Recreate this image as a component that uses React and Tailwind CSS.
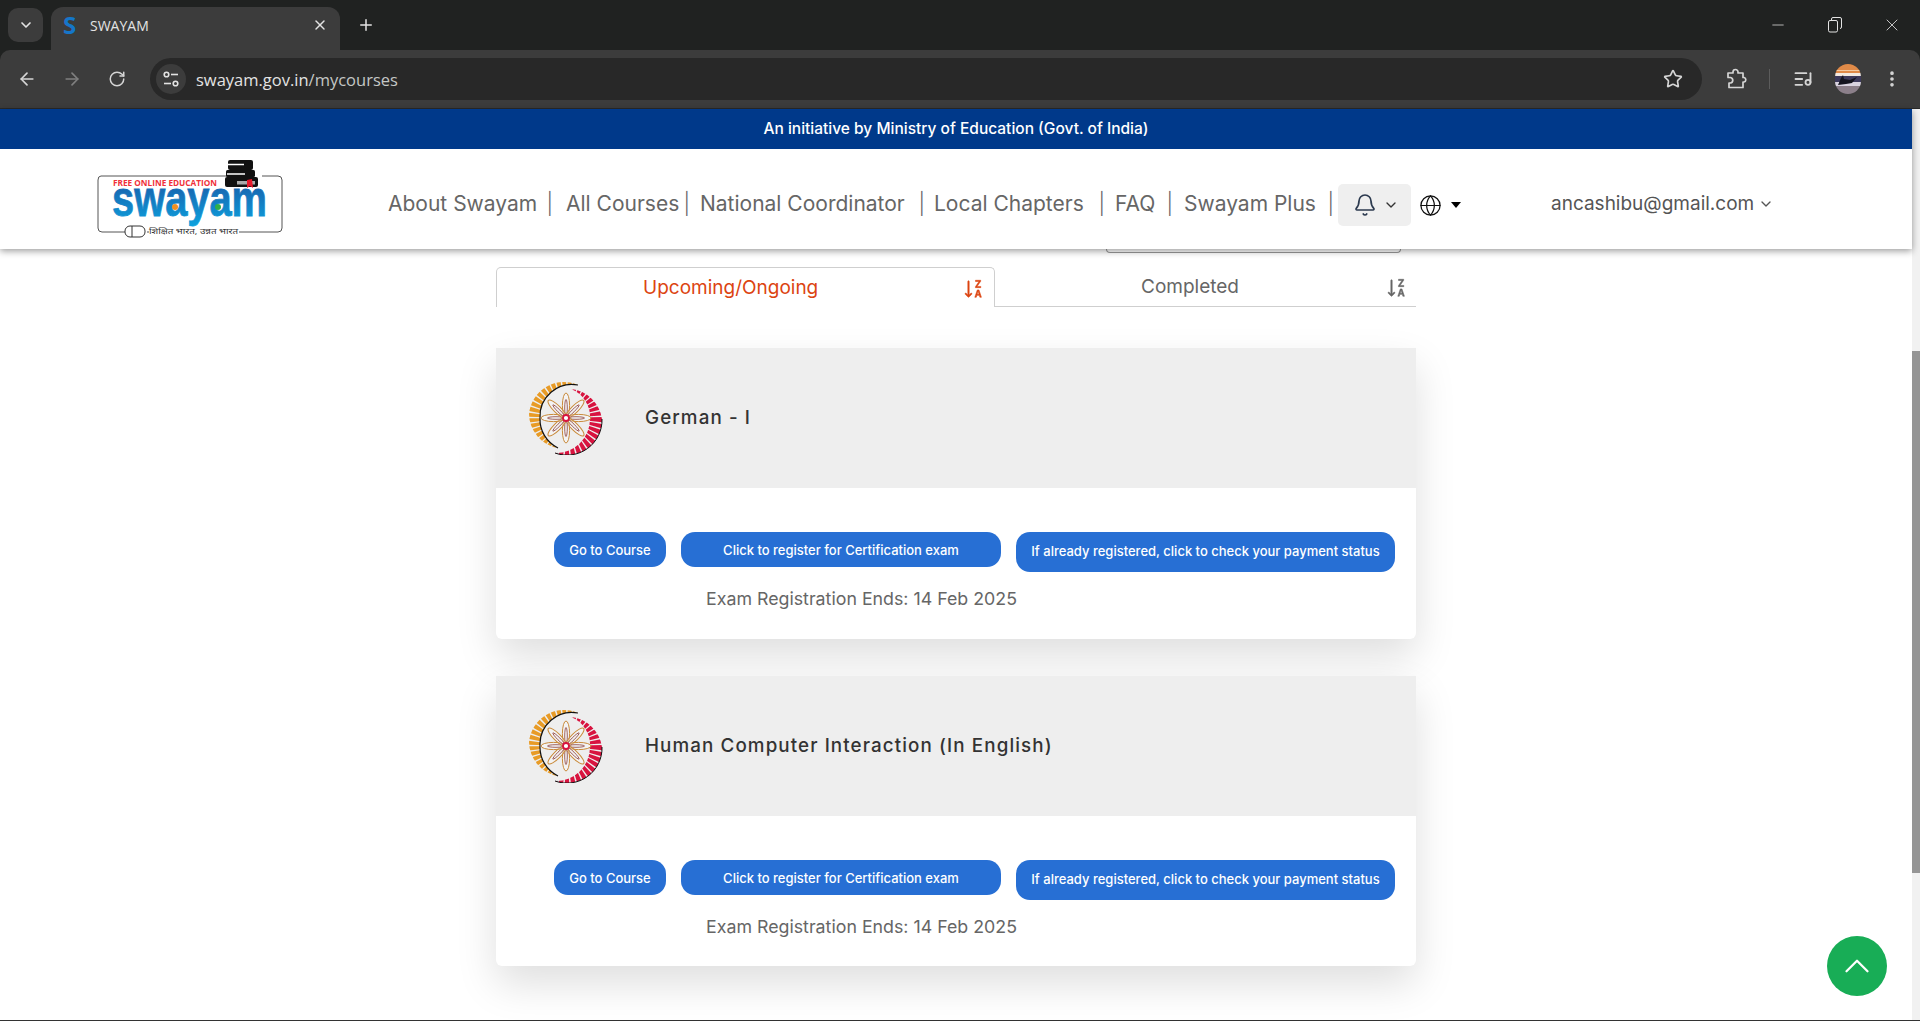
import React from 'react';
import { ArrowLeft, ArrowRight, RotateCw, Star, ListMusic, ChevronDown, ChevronUp, X, Plus, Minus, Bell, Globe, EllipsisVertical } from 'lucide-react';
import { BsSortAlphaDownAlt } from 'react-icons/bs';

const NAV = [
  { label: 'About Swayam', cls: 'w-[165px]' },
  { label: 'All Courses', cls: 'w-[124px] ml-[13px]' },
  { label: 'National Coordinator', cls: 'w-[225px] ml-[10px]' },
  { label: 'Local Chapters', cls: 'w-[171px] ml-[9px]' },
  { label: 'FAQ', cls: 'w-[58px] ml-[10px]' },
  { label: 'Swayam Plus', cls: 'w-[150px] ml-[11px]' },
];

const COURSES = ['German - I', 'Human Computer Interaction (In English)'];

const ORANGE_ARC = 'M49 4 A35 35 0 0 0 0 33 A35 35 0 0 0 29 67 A32 32 0 0 1 11 37 A32 32 0 0 1 49 4 Z';
const RED_ARC = 'M42 8 A35 35 0 0 1 73 38 A35 35 0 0 1 26 72 A34 34 0 0 0 61 38 A30 30 0 0 0 42 8 Z';

const InstituteLogo = () => (
  <svg width="74" height="74" viewBox="0 0 74 74" className="shrink-0">
    <defs>
      <clipPath id="orangeArc"><path d={ORANGE_ARC} /></clipPath>
      <clipPath id="redArc"><path d={RED_ARC} /></clipPath>
    </defs>
    <g clipPath="url(#orangeArc)">
      <circle cx="37" cy="37" r="26" fill="none" stroke="#e89b26" strokeWidth="24" strokeDasharray="3 1.1" />
    </g>
    <path d="M29 67 A32 32 0 0 1 11 37 A32 32 0 0 1 49 4" fill="none" stroke="#111" strokeWidth="1.2" />
    <g clipPath="url(#redArc)">
      <circle cx="37" cy="37" r="28" fill="none" stroke="#d8133f" strokeWidth="24" strokeDasharray="3.4 1.2" />
    </g>
    <path d="M73 38 A35 35 0 0 1 26 72" fill="none" stroke="#111" strokeWidth="1" />
    {[0, 45, 90, 135, 180, 225, 270, 315].map((deg) => (
      <g key={deg} transform={`rotate(${deg} 37 37)`}>
        <ellipse cx="37" cy="24.5" rx="3.6" ry="12.5" fill="#fff" fillOpacity="0.3" stroke="#c98a3a" strokeWidth="1" />
        <ellipse cx="37" cy="27" rx="1.3" ry="8.5" fill="none" stroke="#8c3f3a" strokeWidth="0.8" />
      </g>
    ))}
    <circle cx="37" cy="37" r="3" fill="#fff" stroke="#d8133f" strokeWidth="1.8" />
  </svg>
);

const SwayamLogo = () => (
  <svg width="186" height="80" viewBox="0 0 186 80" className="shrink-0 overflow-visible">
    <defs>
      <linearGradient id="swayamGrad" x1="0" y1="0" x2="0" y2="1">
        <stop offset="0" stopColor="#1c4f9f" />
        <stop offset="1" stopColor="#0ca3df" />
      </linearGradient>
    </defs>
    <path d="M130 17 H4 Q1 17 1 21 V69 Q1 73 5 73 H28 M50 73 H52 M142 73 H181 Q185 73 185 69 V21 Q185 17 181 17 H165" fill="none" stroke="#555" strokeWidth="1" />
    <rect x="28" y="67" width="20" height="11" rx="5" fill="#fff" stroke="#333" strokeWidth="1" />
    <line x1="35" y1="67" x2="35" y2="78" stroke="#333" strokeWidth="1" />
    <rect x="131" y="1" width="25" height="10" rx="2" fill="#111" />
    <rect x="129" y="11" width="29" height="7" rx="1.5" fill="#111" />
    <rect x="128" y="18" width="33" height="10" rx="2" fill="#111" />
    <path d="M131 5.5 H147 M130 15 H148" stroke="#fff" strokeWidth="1.5" />
    <rect x="140" y="22" width="18" height="3.5" fill="#aaa" />
    <path d="M150 21 l5 -1 1 9 -3 -2 -3 2 z" fill="#e8192c" />
    <text x="16" y="27" fontFamily="'Open Sans',sans-serif" fontSize="8" fontWeight="700" fill="#f0303a" textLength="104" lengthAdjust="spacingAndGlyphs">FREE ONLINE EDUCATION</text>
    <text x="15" y="57" fontFamily="'Liberation Sans',sans-serif" fontSize="50" fontWeight="700" fill="url(#swayamGrad)" stroke="url(#swayamGrad)" strokeWidth="0.8" textLength="155" lengthAdjust="spacingAndGlyphs">swayam</text>
    <circle cx="78" cy="48" r="3" fill="#ef8f1f" />
    <circle cx="121" cy="48" r="3" fill="#2fae4a" />
    <text x="52" y="75" fontFamily="'Noto Sans','DejaVu Sans',sans-serif" fontSize="7.5" fill="#333" textLength="89" lengthAdjust="spacingAndGlyphs">शिक्षित भारत, उन्नत भारत</text>
  </svg>
);

const TuneIcon = () => (
  <svg width="20" height="20" viewBox="0 0 20 20" fill="none" stroke="#e3e3e3" strokeWidth="1.6">
    <circle cx="5.5" cy="5.5" r="2.3" />
    <path d="M10 5.5 h7" />
    <path d="M3 14.5 h7" />
    <circle cx="14.5" cy="14.5" r="2.3" />
  </svg>
);

const PuzzleIcon = () => (
  <svg width="22" height="22" viewBox="0 0 22 22" fill="none" stroke="#d5d5d5" strokeWidth="1.7" strokeLinejoin="round">
    <path d="M3 5 H8 V4 A2.5 2.5 0 0 1 13 4 V5 H18 V9.5 H19 A2.3 2.3 0 0 1 19 14 H18 V19.5 H4 V15 H5.5 A2.8 2.8 0 0 0 5.5 9.5 H3 Z" />
  </svg>
);

const Avatar = () => (
  <svg width="26" height="30" viewBox="0 0 26 30" className="rounded-full">
    <rect width="26" height="9" fill="#e08a48" />
    <rect y="6" width="26" height="1" fill="#f4c9a0" />
    <rect y="9" width="26" height="3" fill="#f2e9e1" />
    <rect y="12" width="26" height="6" fill="#3d3a5c" />
    <rect y="18" width="26" height="4" fill="#d9d3e0" />
    <rect y="22" width="26" height="8" fill="#8b7f8a" />
    <path d="M3 21 l3 -7 2 -3 1 4 6 1 7 -3 -5 6 -6 1 z" fill="#14141f" />
  </svg>
);

const RestoreIcon = () => (
  <svg width="14" height="16" viewBox="0 0 14 16" fill="none" stroke="#e3e3e3" strokeWidth="1">
    <rect x="0.5" y="3.5" width="9" height="11.5" rx="1.5" />
    <path d="M3.5 3 V2 Q3.5 0.5 5 0.5 H12 Q13.5 0.5 13.5 2 V10 Q13.5 11.5 12 11.5" />
  </svg>
);

const BrowserChrome = () => (
  <div className="shrink-0 bg-[#202221] font-['Open_Sans',sans-serif]">
    <div className="h-[50px] flex items-start pl-[8px]">
      <div className="mt-[8px] w-[35px] h-[34px] rounded-[10px] bg-[#3c3c3c] flex items-center justify-center">
        <ChevronDown size={16} color="#e3e3e3" strokeWidth={2.5} />
      </div>
      <div className="ml-[8px] mt-[7px] w-[289px] h-[43px] rounded-t-[12px] bg-[#3c3c3c] flex items-center pl-[12px] pr-[12px] pb-[7px]">
        <span className="w-[16px] text-[24px] leading-none font-bold text-[#1576c9]">S</span>
        <span className="ml-[11px] text-[14px] text-[#e3e3e3]">SWAYAM</span>
        <X size={16} color="#e3e3e3" strokeWidth={2.2} className="ml-auto" />
      </div>
      <Plus size={18} color="#e3e3e3" strokeWidth={2} className="ml-[17px] mt-[16px]" />
      <div className="ml-auto flex items-center h-[50px]">
        <Minus size={18} color="#e3e3e3" strokeWidth={1} className="mr-[41px]" />
        <RestoreIcon />
        <X size={20} color="#e3e3e3" strokeWidth={1} className="ml-[40px] mr-[18px]" />
      </div>
    </div>
    <div className="h-[59px] bg-[#3c3c3c] rounded-t-[10px] border-b border-[#2a2a2a] flex items-center pl-[17px]">
      <ArrowLeft size={20} color="#d5d5d5" strokeWidth={2} />
      <ArrowRight size={20} color="#7f7f7f" strokeWidth={2} className="ml-[25px]" />
      <RotateCw size={18} color="#d5d5d5" strokeWidth={2} className="ml-[26px]" />
      <div className="ml-[24px] w-[1552px] h-[42px] rounded-full bg-[#282828] flex items-center pl-[6px] pr-[19px]">
        <div className="w-[30px] h-[30px] rounded-full bg-[#3c3c3c] flex items-center justify-center">
          <TuneIcon />
        </div>
        <span className="ml-[10px] mt-[2px] text-[16.5px] text-[#e3e3e3]">swayam.gov.in<span className="text-[#c4c7c5]">/mycourses</span></span>
        <Star size={20} color="#d5d5d5" strokeWidth={2} className="ml-auto" />
      </div>
      <div className="ml-[23px]"><PuzzleIcon /></div>
      <div className="ml-[22px] w-px h-[20px] bg-[#5c5c5c]" />
      <ListMusic size={20} color="#d5d5d5" strokeWidth={2.2} className="ml-[23px]" />
      <div className="ml-[22px] flex"><Avatar /></div>
      <EllipsisVertical size={20} color="#d5d5d5" strokeWidth={2.4} className="ml-[21px]" />
    </div>
  </div>
);

const CourseCard = ({ title }) => (
  <div className="mt-[37px] first:mt-0 bg-white rounded-b-[6px] shadow-[0_18px_40px_rgba(0,0,0,0.13)] h-[291px] last:h-[290px]">
    <div className="h-[140px] bg-[#eeeeee] flex items-center pl-[33px]">
      <InstituteLogo />
      <span className="ml-[42px] text-[18.8px] font-medium tracking-[1.1px] text-[#333333]">{title}</span>
    </div>
    <div className="pt-[44px] pl-[58px]">
      <div className="flex items-start gap-[15px] text-[13px] font-medium text-white">
        <button className="w-[112px] h-[35px] pt-[2px] rounded-[14px] bg-[#276fd4]">Go to Course</button>
        <button className="w-[320px] h-[35px] pt-[2px] rounded-[14px] bg-[#276fd4]">Click to register for Certification exam</button>
        <button className="w-[379px] h-[40px] rounded-[14px] bg-[#276fd4]">If already registered, click to check your payment status</button>
      </div>
      <p className="mt-[15px] ml-[152px] text-[17.8px] leading-[24px] text-[#666666]">Exam Registration Ends: 14 Feb 2025</p>
    </div>
  </div>
);

export default function App() {
  return (
    <div className="h-[1021px] w-[1920px] overflow-hidden flex flex-col bg-[#333333] font-['Inter',sans-serif]">
      <BrowserChrome />
      <div className="h-[911px] flex relative">
        <div className="w-[1912px] bg-white flex flex-col">
          <div className="relative z-10 shadow-[0_2px_7px_rgba(0,0,0,0.4)]">
            <div className="h-[40px] bg-[#00398a] flex items-center justify-center text-[15.5px] font-medium text-white">
              An initiative by Ministry of Education (Govt. of India)
            </div>
            <div className="h-[100px] bg-white flex items-center pl-[97px] pt-[12px]">
              <div className="mt-[-13px] flex"><SwayamLogo /></div>
              <nav className="ml-[105px] mt-[-2px] flex items-center text-[21px] text-[#666666]">
                {NAV.map((item) => (
                  <span key={item.label} className={`flex justify-between ${item.cls}`}>
                    <span>{item.label}</span>
                    <span className="font-light">|</span>
                  </span>
                ))}
              </nav>
              <div className="ml-[4px] w-[73px] h-[42px] rounded-[5px] bg-[#efefef] flex items-center justify-center gap-[6px] pl-[3px]">
                <Bell size={24} color="#2c3a4f" strokeWidth={1.7} />
                <ChevronDown size={16} color="#333" strokeWidth={2} />
              </div>
              <Globe size={23} color="#111" strokeWidth={1.3} className="ml-[8px]" />
              <span className="ml-[9px] w-0 h-0 border-x-[5.5px] border-x-transparent border-t-[6px] border-t-black" />
              <span className="ml-[90px] mt-[-2px] text-[19px] text-[#555555]">ancashibu@gmail.com</span>
              <ChevronDown size={16} color="#555" strokeWidth={2} className="ml-[4px] mt-[-2px]" />
            </div>
          </div>
          <div className="ml-[1106px] w-[295px] h-[4px] border border-t-0 border-[#999999] rounded-b-[8px]" />
          <div className="mt-[14px] ml-[496px] w-[920px]">
            <div className="h-[40px] flex text-[19px]">
              <div className="w-[499px] pt-[2px] border border-b-0 border-[#cfcfcf] rounded-t-[5px] flex items-center pl-[146px] pr-[9px] text-[#dc4411]">
                <span>Upcoming/Ongoing</span>
                <BsSortAlphaDownAlt size={22} stroke="currentColor" strokeWidth={0.4} className="ml-auto" />
              </div>
              <div className="flex-1 pt-[2px] border-b border-[#cfcfcf] flex items-center pl-[146px] pr-[8px] text-[#666666]">
                <span>Completed</span>
                <BsSortAlphaDownAlt size={22} stroke="currentColor" strokeWidth={0.4} className="ml-auto" />
              </div>
            </div>
            <div className="mt-[41px]">
              {COURSES.map((title) => (
                <CourseCard key={title} title={title} />
              ))}
            </div>
          </div>
        </div>
        <div className="w-[8px] bg-[#f1f1f1] pt-[242px]">
          <div className="h-[522px] bg-[#959595]" />
        </div>
        <button className="absolute left-[1827px] top-[827px] w-[60px] h-[60px] rounded-full bg-[#18ad56] flex items-center justify-center">
          <ChevronUp size={42} color="#fff" strokeWidth={1.3} />
        </button>
      </div>
      <div className="h-px bg-[#333333]" />
    </div>
  );
}
